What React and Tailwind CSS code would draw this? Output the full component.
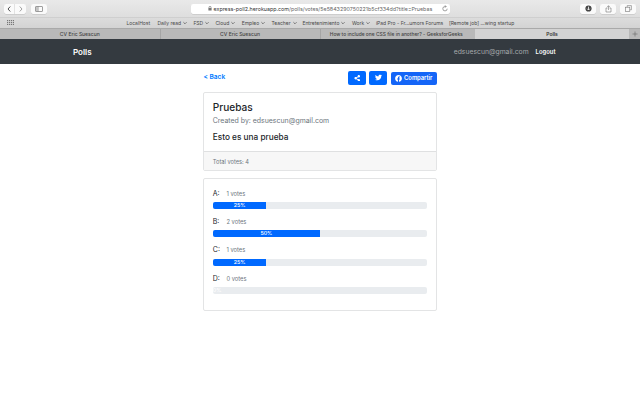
import React from 'react';
import { FaShareAlt, FaTwitter, FaFacebook } from 'react-icons/fa';

const bookmarks = [
  { label: 'LocalHost', width: 31 },
  { label: 'Daily read', width: 36, menu: true },
  { label: 'FSD', width: 22, menu: true },
  { label: 'Cloud', width: 26.3, menu: true },
  { label: 'Empleo', width: 29.7, menu: true },
  { label: 'Teacher', width: 31, menu: true },
  { label: 'Entretenimiento', width: 49.5, menu: true },
  { label: 'Work', width: 24, menu: true },
  { label: 'iPad Pro - Fr...umors Forums', width: 73 },
  { label: '[Remote job] ...wing startup', width: 66 },
];

const options = [
  { name: 'A:', votes: 1, percent: 25 },
  { name: 'B:', votes: 2, percent: 50 },
  { name: 'C:', votes: 1, percent: 25 },
  { name: 'D:', votes: 0, percent: 0 },
];

function Chevron({ d, className }) {
  return (
    <svg viewBox="0 0 6 6" className={className} fill="none" stroke="currentColor" strokeLinecap="round" strokeLinejoin="round">
      <path d={d} />
    </svg>
  );
}

function Toolbar() {
  return (
    <div className="flex h-[17.5px] items-center border-b border-[#cfcfcf] bg-linear-to-b from-[#e9e9e9] to-[#dedede] pt-px">
      <div className="ml-1 flex h-[10px] w-[22px] rounded-[2px] bg-[#fafafa] shadow-[0_0.5px_0.5px_#bbb]">
        <div className="flex w-[11px] items-center justify-center border-r border-[#e2e2e2] text-[#505050]">
          <Chevron d="M4 0.8 2 3l2 2.2" className="size-[6px]" />
        </div>
        <div className="flex w-[11px] items-center justify-center text-[#a0a0a0]">
          <Chevron d="M2 0.8 4 3 2 5.2" className="size-[6px]" />
        </div>
      </div>
      <div className="ml-[5px] flex h-[10px] w-4 items-center justify-center rounded-[2px] bg-[#fafafa] shadow-[0_0.5px_0.5px_#bbb]">
        <svg viewBox="0 0 8 6" className="h-[6px] w-2" fill="none" stroke="#777" strokeWidth="0.7">
          <rect x="0.5" y="0.5" width="7" height="5" rx="0.5" />
          <path d="M3 .5v5M1.2 1.8h1M1.2 3h1M1.2 4.2h1" />
        </svg>
      </div>
      <div className="ml-[143.5px] flex h-[10px] w-[259px] items-center rounded-[2px] bg-white shadow-[0_0.5px_0.5px_#bbb]">
        <svg viewBox="0 0 4 5" className="ml-[17px] h-[5px] w-1" fill="none" stroke="#777" strokeWidth="0.7">
          <path d="M1 2V1.3a1 1 0 0 1 2 0V2" />
          <rect x="0.4" y="2" width="3.2" height="2.5" fill="#777" stroke="none" />
        </svg>
        <div className="ml-[2px] w-[219px] whitespace-nowrap text-[5.33px] leading-[10px] text-[#666]">
          <span className="text-[#333]">express-poll2.herokuapp.com</span>/polls/votes/5e5843290750221b5cf334dd?title=Pruebas
        </div>
        <svg viewBox="0 0 6 7" className="ml-[9px] h-[7px] w-[6px]" fill="none" stroke="#666" strokeWidth="0.6">
          <path d="M5.2 3.7A2.2 2.2 0 1 1 3 1.5h1M3 .3l1.2 1.2L3 2.7" />
        </svg>
      </div>
      <div className="ml-[130.5px] flex gap-1">
        <div className="flex h-[10px] w-4 items-center justify-center rounded-[2px] bg-[#fafafa] shadow-[0_0.5px_0.5px_#bbb]">
          <svg viewBox="0 0 7 7" className="size-[7px]">
            <circle cx="3.5" cy="3.5" r="3.1" fill="#444" />
            <path d="M3.5 1.6v3.2M2.2 3.7l1.3 1.3 1.3-1.3" fill="none" stroke="#fff" strokeWidth="0.8" />
          </svg>
        </div>
        <div className="flex h-[10px] w-4 items-center justify-center rounded-[2px] bg-[#fafafa] shadow-[0_0.5px_0.5px_#bbb]">
          <svg viewBox="0 0 7 8" className="h-2 w-[7px]" fill="none" stroke="#777" strokeWidth="0.6">
            <path d="M2.5 3H1v4h5V3H4.5M3.5 5V.8M2.2 2l1.3-1.3L4.8 2" />
          </svg>
        </div>
        <div className="flex h-[10px] w-4 items-center justify-center rounded-[2px] bg-[#fafafa] shadow-[0_0.5px_0.5px_#bbb]">
          <svg viewBox="0 0 7 7" className="size-[7px]" fill="none" stroke="#777" strokeWidth="0.6">
            <path d="M2.2 2.2V.6h4.2v4.2H4.8" />
            <rect x="0.6" y="2.2" width="4.2" height="4.2" />
          </svg>
        </div>
      </div>
    </div>
  );
}

function Bookmarks() {
  return (
    <div className="flex h-[10.5px] items-center bg-linear-to-b from-[#dcdcdc] to-[#d3d3d3] text-[5px] leading-[10px] text-[#484848]">
      <svg viewBox="0 0 7 5" className="ml-[7px] h-[5px] w-[7px]" fill="#777">
        {[0, 2, 4].map((y) => [0, 2, 4, 6].map((x) => <rect key={`${x}-${y}`} x={x} y={y} width="1.2" height="1.2" />))}
      </svg>
      <div className="ml-[112.4px] flex">
        {bookmarks.map((b) => (
          <div key={b.label} className="flex shrink-0 items-center gap-[2px] whitespace-nowrap" style={{ width: b.width }}>
            {b.label}
            {b.menu && <Chevron d="M1 2.2 3 4.2 5 2.2" className="size-[4px]" />}
          </div>
        ))}
      </div>
    </div>
  );
}

function Tabs() {
  return (
    <div className="flex h-[11px] border-t border-[#a9a9a9] bg-[#b9b9b9] text-center text-[5px] leading-[10px] font-medium text-[#444]">
      <div className="w-[160.5px] border-r border-[#a5a5a5]">CV Eric Suescun</div>
      <div className="w-[160px] border-r border-[#a5a5a5]">CV Eric Suescun</div>
      <div className="w-[154.5px] pr-[3px] text-[4.9px] whitespace-nowrap">How to include one CSS file in another? - GeeksforGeeks</div>
      <div className="w-[154px] bg-[#d3d3d3] font-semibold text-[#333]">Polls</div>
      <div className="flex grow items-center justify-center bg-[#b9b9b9]">
        <svg viewBox="0 0 6 6" className="size-[6px]" stroke="#666" strokeWidth="0.6"><path d="M3 .5v5M.5 3h5" /></svg>
      </div>
    </div>
  );
}

export default function App() {
  return (
    <div className="h-[400px] w-[640px] overflow-hidden bg-white font-['Inter',sans-serif] text-[#212529]">
      <Toolbar />
      <Bookmarks />
      <Tabs />
      <nav className="flex h-[25px] items-center bg-[#343a40] pr-[84.5px] pl-[73px]">
        <span className="text-[8px] font-semibold text-white">Polls</span>
        <span className="ml-auto pt-[1.5px] text-[6.8px] text-[#a5a8ab]">edsuescun@gmail.com</span>
        <span className="ml-[7px] pt-px text-[5.9px] font-semibold text-white">Logout</span>
      </nav>
      <main className="ml-[203.4px] w-[233.2px] pt-[7px]">
        <div className="flex h-[14px] items-start">
          <a className="text-[6.6px] leading-[12px] font-semibold text-[#007bff]">&lt; Back</a>
          <div className="ml-auto flex gap-[3.7px] text-white">
            <div className="flex h-[13.5px] w-[17.8px] items-center justify-center rounded-[2px] bg-[#0069ff]"><FaShareAlt className="size-[6.5px]" /></div>
            <div className="flex h-[13.5px] w-[17.8px] items-center justify-center rounded-[2px] bg-[#0069ff]"><FaTwitter className="size-[7px]" /></div>
            <div className="mt-px flex h-[12.5px] w-[45.7px] items-center justify-center gap-[2px] rounded-[2px] bg-[#1465f7] text-[5.8px] font-semibold">
              <FaFacebook className="size-[7px] shrink-0" />Compartir
            </div>
          </div>
        </div>
        <section className="mt-[6.5px] h-[79.5px] overflow-hidden rounded-[2px] border border-[#e3e4e5]">
          <div className="h-[58.5px] pt-[8.5px] pl-[8.4px]">
            <h1 className="text-[10.1px] leading-[13px] font-medium">Pruebas</h1>
            <p className="pt-[0.6px] text-[6.95px] leading-[12px] text-[#6c757d]">Created by: edsuescun@gmail.com</p>
            <h2 className="mt-[4.6px] text-[8.25px] leading-[12px] font-medium">Esto es una prueba</h2>
          </div>
          <div className="h-[20px] border-t border-[#dfe0e1] bg-[#f7f7f7] pl-[8.4px] text-[5.7px] leading-[19px] text-[#6c757d]">Total votes: 4</div>
        </section>
        <section className="mt-[7px] h-[133px] rounded-[2px] border border-[#e3e4e5] px-[8.4px] pt-[8.7px]">
          {options.map((o) => (
            <div key={o.name} className="h-[28.4px]">
              <div className="flex h-[14.3px] items-start pt-px">
                <span className="w-[13.7px] text-[7px] leading-[10px]">{o.name}</span>
                <span className="text-[5.75px] leading-[10px] text-[#6c757d]">{o.votes} votes</span>
              </div>
              <div className="h-[7px] overflow-hidden rounded-[2px] bg-[#e9ecef]">
                <div className="h-full bg-[#0069ff] text-center text-[5.3px] leading-[7px] font-medium text-white" style={{ width: `${o.percent}%` }}>
                  {o.percent}%
                </div>
              </div>
            </div>
          ))}
        </section>
      </main>
    </div>
  );
}
